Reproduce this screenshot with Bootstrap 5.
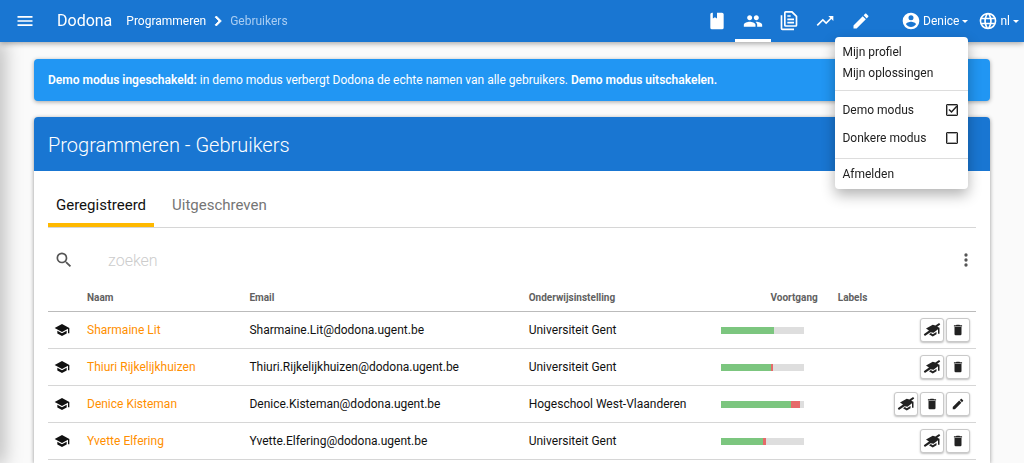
<!DOCTYPE html>
<html lang="nl">
<head>
<meta charset="utf-8">
<meta name="viewport" content="width=device-width, initial-scale=1">
<title>Programmeren - Gebruikers</title>
<link href="https://cdn.jsdelivr.net/npm/bootstrap@5.3.0/dist/css/bootstrap.min.css" rel="stylesheet">
<style>
  body { font-family: Roboto, "Liberation Sans", sans-serif; font-size: 12px; line-height: 18px; background: #fafafa; color: #111; }
  svg { fill: currentColor; display: block; width: 20px; height: 20px; flex: none; }
  svg.sm { width: 16px; height: 16px; }
  a { text-decoration: none; }
  .topbar { height: 42px; background: #1976d2; color: #fff; box-shadow: 0 1px 6px rgba(0,0,0,.4); position: relative; z-index: 3; padding: 0 5px 0 15px; }
  .topbar a, .topbar button { color: #fff; }
  .bare { background: none; border: 0; padding: 0; color: inherit; }
  .brand { font-size: 16px; margin: 0 14px 0 22px; }
  .topbar .crumb-now { color: #a9cdf2; margin-left: 2px; }
  .topbar .crumb-sep { margin-left: 2px; }
  .tools { margin-right: 22px; }
  .account { margin-right: 10px; }
  .tool { width: 36px; height: 42px; display: flex; justify-content: center; align-items: center; border-bottom: 3px solid transparent; border-top: 3px solid transparent; }
  .tool.active { border-bottom-color: #fff; }
  .topbar .dropdown-toggle { display: flex; align-items: center; gap: 2px; height: 42px; white-space: nowrap; }
  .topbar .dropdown-toggle::after { margin: 0 0 0 1px; }
  .topbar .user-menu { top: 37px; right: 0; min-width: 133px; padding: 5px 0 4px; border: 0; border-radius: 4px; font-size: 12px; color: #111; box-shadow: 0 6px 14px rgba(0,0,0,.3); }
  .topbar .user-menu .dropdown-item { color: #212121; padding: 0 7px; line-height: 21px; }
  .topbar .user-menu .toggle-item { line-height: 28px; padding-right: 10px; }
  .user-menu .dropdown-divider { margin: 6px 0 5px; border-color: #ddd; opacity: 1; }
  .user-menu .form-check-input, .user-menu .form-check-input:checked { width: 12px; height: 12px; margin: 0; border: 1px solid #212121; outline: 0; border-radius: 1px; background-color: #fff; box-shadow: inset 0 0 0 1px rgba(33,33,33,.4); }
  .user-menu .form-check-input:checked { background-size: 12px 12px; background-image: url("data:image/svg+xml,%3Csvg xmlns='http://www.w3.org/2000/svg' viewBox='0 0 12 12'%3E%3Cpath d='M3 5.500L5.500 8L11 2' fill='none' stroke='%23212121' stroke-width='1.500'/%3E%3C/svg%3E"); }
  .rail-shade { position: fixed; left: -10px; top: 42px; bottom: 0; width: 10px; box-shadow: 0 0 20px 2px rgba(0,0,0,.35); }
  .page-wrap { padding: 17px 34px 0; }
  .note { background: #2196f3; color: #fff; border-radius: 4px; padding: 12px 14px; margin-bottom: 16px; box-shadow: 0 1px 4px rgba(0,0,0,.35); }
  .note a { color: #fff; }
  .note b { font-weight: 600; }
  .panel { background: #fff; border-radius: 4px 4px 0 0; box-shadow: 0 1px 4px rgba(0,0,0,.4); min-height: calc(100vh - 117px); }
  .panel-title { background: #1976d2; color: #fff; border-radius: 4px 4px 0 0; padding: 16px 14px 14px; font-size: 20px; line-height: 24px; font-weight: 300; margin: 0; }
  .panel-in { padding: 0 14px; }
  .tabs { border-bottom: 1px solid #d6d6d6; padding-top: 12px; font-size: 15px; line-height: 24px; }
  .tabs a { color: #757575; padding: 10px 8px 6px; border-bottom: 4px solid transparent; margin-right: 10px; }
  .tabs a.active { color: #111; border-color: #ffb900; }
  .searchrow { padding: 13px 0 0 6px; height: 51px; color: #555; }
  .searchrow input { border: 0; outline: 0; font-size: 16px; font-weight: 300; margin-left: 34px; padding: 0; height: 30px; background: none; }
  .searchrow input::placeholder { color: #ccc; opacity: 1; }
  .users { width: 100%; table-layout: fixed; }
  .users th { color: #616161; font-size: 10px; font-weight: 700; line-height: 15px; padding: 11px 6px 5px; border-bottom: 1px solid #bbb; height: 32px; }
  .users td { padding: 1px 6px 0; height: 37px; border-bottom: 1px solid #d6d6d6; white-space: nowrap; vertical-align: middle; }
  .users td a { color: #ff8f00; }
  .c-icon { width: 33px; } .c-name { width: 17.5%; } .c-mail { width: 30.1%; } .c-inst { width: 20.7%; } .c-prog { width: 12.6%; }
  .users .prog { padding-right: 14px; }
  .bars { width: 83px; height: 7px; background: #dedede; }
  .ok { background: #7cc67f; } .bad { background: #e66a6a; }
  .acts { gap: 2px; }
  .act { width: 24px; height: 24px; padding: 0; border: 1px solid #c9c9c9; border-radius: 3px; background: #fff; color: #212121; display: flex; align-items: center; justify-content: center; box-shadow: 0 1px 2px rgba(0,0,0,.25); }
  .act svg { width: 14px; height: 14px; }
  .act svg.wide { width: 18px; height: 18px; }
</style>
</head>
<body>
<svg class="d-none" aria-hidden="true">
  <symbol id="menu" viewBox="0 0 24 24"><path d="M3,6H21V8H3V6M3,11H21V13H3V11M3,16H21V18H3V16Z"/></symbol>
  <symbol id="chev" viewBox="0 0 24 24"><path d="M8.59,16.58L13.17,12L8.59,7.41L10,6L16,12L10,18L8.59,16.58Z" stroke="currentColor"/></symbol>
  <symbol id="book" viewBox="0 0 24 24"><path d="M18,22A2,2 0 0,0 20,20V4C20,2.89 19.1,2 18,2H12V9L9.5,7.5L7,9V2H6A2,2 0 0,0 4,4V20A2,2 0 0,0 6,22H18Z"/></symbol>
  <symbol id="people" viewBox="0 0 24 24"><path d="M16 11c1.66 0 2.99-1.34 2.99-3S17.66 5 16 5c-1.66 0-3 1.34-3 3s1.34 3 3 3zm-8 0c1.66 0 2.99-1.34 2.99-3S9.66 5 8 5C6.34 5 5 6.34 5 8s1.34 3 3 3zm0 2c-2.33 0-7 1.17-7 3.5V19h14v-2.5c0-2.33-4.67-3.5-7-3.5zm8 0c-.29 0-.62.02-.97.05 1.16.84 1.97 1.97 1.97 3.45V19h6v-2.5c0-2.33-4.67-3.5-7-3.5z"/></symbol>
  <symbol id="docs" viewBox="0 0 24 24"><path fill-rule="evenodd" d="M8 0H16L22 6V17A2 2 0 0 1 20 19H8A2 2 0 0 1 6 17V2A2 2 0 0 1 8 0M8 2V17H20V7L15 2ZM10 9V11H18V9ZM10 13V15H18V13ZM10 5V7H14V5ZM2 5H4V21H18V23H4A2 2 0 0 1 2 21Z"/></symbol>
  <symbol id="trend" viewBox="0 0 24 24"><path d="M16,6L18.29,8.29L13.41,13.17L9.41,9.17L2,16.59L3.41,18L9.41,12L13.41,16L19.71,9.71L22,12V6H16Z"/></symbol>
  <symbol id="pencil" viewBox="0 0 24 24"><path d="M20.71,7.04C21.1,6.65 21.1,6 20.71,5.63L18.37,3.29C18,2.9 17.35,2.9 16.96,3.29L15.12,5.12L18.87,8.87M3,17.25V21H6.75L17.81,9.93L14.06,6.18L3,17.25Z"/></symbol>
  <symbol id="account" viewBox="0 0 24 24"><path d="M12,19.2C9.5,19.2 7.29,17.92 6,16C6.03,14 10,12.9 12,12.9C14,12.9 17.97,14 18,16C16.71,17.92 14.5,19.2 12,19.2M12,5A3,3 0 0,1 15,8A3,3 0 0,1 12,11A3,3 0 0,1 9,8A3,3 0 0,1 12,5M12,2A10,10 0 0,0 2,12A10,10 0 0,0 12,22A10,10 0 0,0 22,12C22,6.47 17.5,2 12,2Z"/></symbol>
  <symbol id="web" viewBox="0 0 24 24"><path d="M16.36,14C16.44,13.34 16.5,12.68 16.5,12C16.5,11.32 16.44,10.66 16.36,10H19.74C19.9,10.64 20,11.31 20,12C20,12.69 19.9,13.36 19.74,14M14.59,19.56C15.19,18.45 15.65,17.25 15.97,16H18.92C17.96,17.65 16.43,18.93 14.59,19.56M14.34,14H9.66C9.56,13.34 9.5,12.68 9.5,12C9.5,11.32 9.56,10.65 9.66,10H14.34C14.43,10.65 14.5,11.32 14.5,12C14.5,12.68 14.43,13.34 14.34,14M12,19.96C11.17,18.76 10.5,17.43 10.09,16H13.91C13.5,17.43 12.83,18.76 12,19.96M8,8H5.08C6.03,6.34 7.57,5.06 9.4,4.44C8.8,5.55 8.35,6.75 8,8M5.08,16H8C8.35,17.25 8.8,18.45 9.4,19.56C7.57,18.93 6.03,17.65 5.08,16M4.26,14C4.1,13.36 4,12.69 4,12C4,11.31 4.1,10.64 4.26,10H7.64C7.56,10.66 7.5,11.32 7.5,12C7.5,12.68 7.56,13.34 7.64,14M12,4.03C12.83,5.23 13.5,6.57 13.91,8H10.09C10.5,6.57 11.17,5.23 12,4.03M18.92,8H15.97C15.65,6.75 15.19,5.55 14.59,4.44C16.43,5.07 17.96,6.34 18.92,8M12,2C6.47,2 2,6.5 2,12A10,10 0 0,0 12,22A10,10 0 0,0 22,12A10,10 0 0,0 12,2Z"/></symbol>
  <symbol id="search" viewBox="0 0 24 24"><path d="M9.5,3A6.5,6.5 0 0,1 16,9.5C16,11.11 15.41,12.59 14.44,13.73L14.71,14H15.5L20.5,19L19,20.5L14,15.5V14.71L13.73,14.44C12.59,15.41 11.11,16 9.5,16A6.5,6.5 0 0,1 3,9.5A6.5,6.5 0 0,1 9.5,3M9.5,5C7,5 5,7 5,9.5C5,12 7,14 9.5,14C12,14 14,12 14,9.5C14,7 12,5 9.5,5Z"/></symbol>
  <symbol id="dots" viewBox="0 0 24 24"><path d="M12,16A2,2 0 0,1 14,18A2,2 0 0,1 12,20A2,2 0 0,1 10,18A2,2 0 0,1 12,16M12,10A2,2 0 0,1 14,12A2,2 0 0,1 12,14A2,2 0 0,1 10,12A2,2 0 0,1 12,10M12,4A2,2 0 0,1 14,6A2,2 0 0,1 12,8A2,2 0 0,1 10,6A2,2 0 0,1 12,4Z"/></symbol>
  <symbol id="school" viewBox="0 0 24 24"><path d="M12,3L1,9L12,15L21,10.09V17H23V9M5,13.18V17.18L12,21L19,17.18V13.18L12,17L5,13.18Z"/></symbol>
  <symbol id="unschool" viewBox="0 0 24 24"><path d="M13 5L4 10L8 12.500L1 17.500L2.500 20L10 15L14 15.500L20 11V17H22V9L19 7.500L23 4.500L21.500 2.500L16.500 6ZM8 17.500L13 20.500L18 17.500V14.500L13 17.500L10.500 16Z"/></symbol>
  <symbol id="trash" viewBox="0 0 24 24"><path d="M19,4H15.500L14.500,3H9.500L8.500,4H5V6H19M6,19A2,2 0 0,0 8,21H16A2,2 0 0,0 18,19V7H6V19Z"/></symbol>
</svg>

<nav class="topbar d-flex align-items-center" aria-label="Hoofdnavigatie">
  <button class="bare" type="button" aria-label="Menu"><svg><use href="#menu"/></svg></button>
  <a class="brand" href="#">Dodona</a>
  <a href="#">Programmeren</a>
  <svg class="crumb-sep"><use href="#chev"/></svg>
  <a class="crumb-now" href="#">Gebruikers</a>
  <div class="tools d-flex ms-auto">
    <a class="tool" href="#" aria-label="Cursus"><svg><use href="#book"/></svg></a>
    <a class="tool active" href="#" aria-label="Gebruikers"><svg><use href="#people"/></svg></a>
    <a class="tool" href="#" aria-label="Oplossingen"><svg><use href="#docs"/></svg></a>
    <a class="tool" href="#" aria-label="Statistieken"><svg><use href="#trend"/></svg></a>
    <a class="tool" href="#" aria-label="Bewerken"><svg><use href="#pencil"/></svg></a>
  </div>
  <div class="dropdown account">
    <button class="bare dropdown-toggle" type="button" data-bs-toggle="dropdown" aria-expanded="true"><svg><use href="#account"/></svg>Denice</button>
    <ul class="dropdown-menu user-menu show">
      <li><a class="dropdown-item" href="#">Mijn profiel</a></li>
      <li><a class="dropdown-item" href="#">Mijn oplossingen</a></li>
      <li><hr class="dropdown-divider"></li>
      <li><label class="dropdown-item toggle-item d-flex align-items-center justify-content-between">Demo modus <input class="form-check-input" type="checkbox" checked></label></li>
      <li><label class="dropdown-item toggle-item d-flex align-items-center justify-content-between">Donkere modus <input class="form-check-input" type="checkbox"></label></li>
      <li><hr class="dropdown-divider"></li>
      <li><a class="dropdown-item" href="#">Afmelden</a></li>
    </ul>
  </div>
  <button class="bare dropdown-toggle" type="button"><svg><use href="#web"/></svg>nl</button>
</nav>
<div class="rail-shade"></div>

<main class="page-wrap">
  <div class="note" role="alert"><b>Demo modus ingeschakeld:</b> in demo modus verbergt Dodona de echte namen van alle gebruikers. <a href="#"><b>Demo modus uitschakelen.</b></a></div>
  <section class="panel">
    <h1 class="panel-title">Programmeren - Gebruikers</h1>
    <div class="panel-in">
      <div class="tabs d-flex"><a class="active" href="#">Geregistreerd</a><a href="#">Uitgeschreven</a></div>
      <div class="searchrow d-flex align-items-center">
        <svg><use href="#search"/></svg>
        <input class="flex-grow-1" type="text" placeholder="zoeken" aria-label="zoeken">
        <button class="bare" type="button" aria-label="Opties"><svg><use href="#dots"/></svg></button>
      </div>
      <table class="users">
        <colgroup><col class="c-icon"><col class="c-name"><col class="c-mail"><col class="c-inst"><col class="c-prog"><col></colgroup>
        <thead><tr><th></th><th>Naam</th><th>Email</th><th>Onderwijsinstelling</th><th class="prog text-end">Voortgang</th><th>Labels</th></tr></thead>
        <tbody>
          <tr>
            <td><svg class="sm"><use href="#school"/></svg></td><td><a href="#">Sharmaine Lit</a></td><td>Sharmaine.Lit@dodona.ugent.be</td><td>Universiteit Gent</td>
            <td><div class="bars d-flex"><div class="ok" style="width:64%"></div></div></td>
            <td><div class="acts d-flex justify-content-end"><button class="act" type="button" aria-label="Student maken"><svg class="wide"><use href="#unschool"/></svg></button><button class="act" type="button" aria-label="Verwijderen"><svg><use href="#trash"/></svg></button></div></td>
          </tr>
          <tr>
            <td><svg class="sm"><use href="#school"/></svg></td><td><a href="#">Thiuri Rijkelijkhuizen</a></td><td>Thiuri.Rijkelijkhuizen@dodona.ugent.be</td><td>Universiteit Gent</td>
            <td><div class="bars d-flex"><div class="ok" style="width:61%"></div><div class="bad" style="width:1.5%"></div></div></td>
            <td><div class="acts d-flex justify-content-end"><button class="act" type="button" aria-label="Student maken"><svg class="wide"><use href="#unschool"/></svg></button><button class="act" type="button" aria-label="Verwijderen"><svg><use href="#trash"/></svg></button></div></td>
          </tr>
          <tr>
            <td><svg class="sm"><use href="#school"/></svg></td><td><a href="#">Denice Kisteman</a></td><td>Denice.Kisteman@dodona.ugent.be</td><td>Hogeschool West-Vlaanderen</td>
            <td><div class="bars d-flex"><div class="ok" style="width:85%"></div><div class="bad" style="width:10%"></div></div></td>
            <td><div class="acts d-flex justify-content-end"><button class="act" type="button" aria-label="Student maken"><svg class="wide"><use href="#unschool"/></svg></button><button class="act" type="button" aria-label="Verwijderen"><svg><use href="#trash"/></svg></button><button class="act" type="button" aria-label="Bewerken"><svg><use href="#pencil"/></svg></button></div></td>
          </tr>
          <tr>
            <td><svg class="sm"><use href="#school"/></svg></td><td><a href="#">Yvette Elfering</a></td><td>Yvette.Elfering@dodona.ugent.be</td><td>Universiteit Gent</td>
            <td><div class="bars d-flex"><div class="ok" style="width:51%"></div><div class="bad" style="width:3%"></div></div></td>
            <td><div class="acts d-flex justify-content-end"><button class="act" type="button" aria-label="Student maken"><svg class="wide"><use href="#unschool"/></svg></button><button class="act" type="button" aria-label="Verwijderen"><svg><use href="#trash"/></svg></button></div></td>
          </tr>
        </tbody>
      </table>
    </div>
  </section>
</main>
<script src="https://cdn.jsdelivr.net/npm/bootstrap@5.3.0/dist/js/bootstrap.bundle.min.js"></script>
</body>
</html>
